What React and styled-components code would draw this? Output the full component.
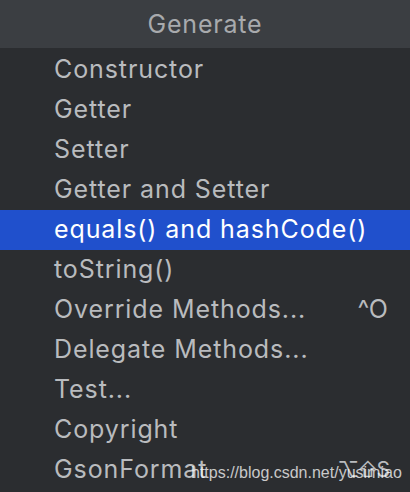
import React from 'react';
import styled, { createGlobalStyle } from 'styled-components';

const GlobalStyle = createGlobalStyle`
  html, body {
    margin: 0;
    padding: 0;
    background: #2b2d30;
  }
`;

const Popup = styled.div`
  position: relative;
  width: 410px;
  height: 492px;
  overflow: hidden;
  background: #2b2d30;
  font-family: Inter, 'Liberation Sans', sans-serif;
`;

const Header = styled.div`
  height: 47px;
  display: flex;
  align-items: center;
  justify-content: center;
  background: #3b3e42;
  color: #a8aaad;
  font-size: 25px;
  letter-spacing: 0.8px;
  padding-bottom: 1px;
`;

const List = styled.ul`
  list-style: none;
  margin: 0;
  padding: 0;
  padding-top: 2px;
`;

const Item = styled.li`
  height: 40px;
  display: flex;
  align-items: center;
  justify-content: space-between;
  padding: 0 22px 2px 54px;
  box-sizing: border-box;
  font-size: 25px;
  letter-spacing: 0.9px;
  color: ${({ selected }) => (selected ? '#ffffff' : '#b9bbbe')};
  background: ${({ selected }) => (selected ? '#2050cc' : 'transparent')};
`;

const Shortcut = styled.span`
  color: #b9bbbe;
  letter-spacing: ${({ compact }) => (compact ? '-2px' : '0')};
  font-size: ${({ compact }) => (compact ? '21px' : '25px')};
`;

const Watermark = styled.div`
  position: absolute;
  left: 191px;
  bottom: 10px;
  font-family: 'Liberation Sans', Arial, sans-serif;
  font-size: 16px;
  color: rgba(255, 255, 255, 0.75);
`;

const items = [
  { label: 'Constructor' },
  { label: 'Getter' },
  { label: 'Setter' },
  { label: 'Getter and Setter' },
  { label: 'equals() and hashCode()', selected: true },
  { label: 'toString()' },
  { label: 'Override Methods...', shortcut: '^O' },
  { label: 'Delegate Methods...' },
  { label: 'Test...' },
  { label: 'Copyright' },
  { label: 'GsonFormat', shortcut: '⌥⇧S', compact: true },
];

const App = () => (
  <Popup>
    <GlobalStyle />
    <Header>Generate</Header>
    <List>
      {items.map(item => (
        <Item key={item.label} selected={item.selected}>
          <span>{item.label}</span>
          {item.shortcut && (
            <Shortcut compact={item.compact}>{item.shortcut}</Shortcut>
          )}
        </Item>
      ))}
    </List>
    <Watermark>https://blog.csdn.net/yusimiao</Watermark>
  </Popup>
);

export default App;
